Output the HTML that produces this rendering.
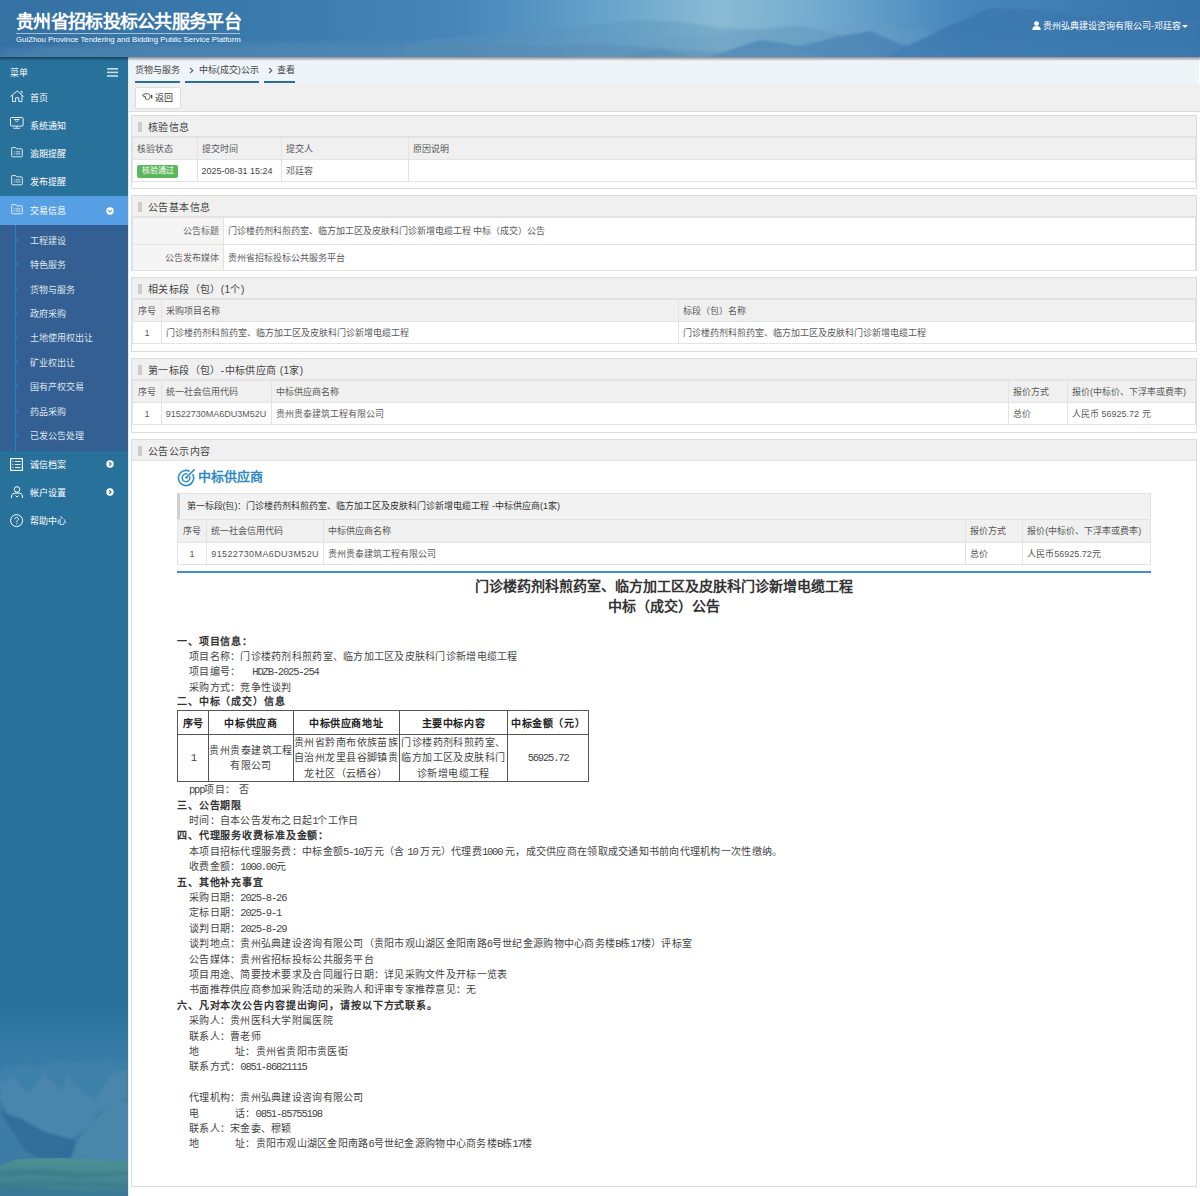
<!DOCTYPE html>
<html lang="zh-CN">
<head>
<meta charset="utf-8">
<style>
*{margin:0;padding:0;box-sizing:border-box}
html,body{width:1200px;height:1196px;overflow:hidden;background:#fff;font-family:"Liberation Sans",sans-serif;color:#333}
.abs{position:absolute}
#hdr{position:absolute;left:0;top:0;width:1200px;height:57px;overflow:hidden;background:linear-gradient(90deg,#3572a6 0%,#4a86b8 25%,#6aa2c6 50%,#7fb2cf 58%,#5a94c0 75%,#3d7db0 100%)}
#hdr svg{position:absolute;left:0;top:0}
#title{position:absolute;left:16px;top:10px;font-size:18px;font-weight:bold;color:#fff;letter-spacing:-0.7px;line-height:24px;white-space:nowrap}
#tline{position:absolute;left:16px;top:32.5px;width:224px;height:1px;background:rgba(255,255,255,.55)}
#sub{position:absolute;left:16px;top:35px;font-size:7.8px;color:#fff;line-height:10px;white-space:nowrap}
#user{position:absolute;left:1043px;top:20px;font-size:9px;color:#fff;line-height:12px;white-space:nowrap}
#side{position:absolute;left:0;top:57px;width:128px;height:1139px;background:#28719b;overflow:hidden}
#shadow{position:absolute;left:0;top:57px;width:1200px;height:4px;background:linear-gradient(rgba(0,0,0,.42),rgba(0,0,0,0))}
.mi{position:absolute;left:0;width:128px;height:28px;color:#fff;font-size:9px;line-height:28px}
.mi .t{position:absolute;left:30px;top:1px}
.mi svg{position:absolute;left:10px}
.smi{position:absolute;left:30px;color:#dde6ef;font-size:9px;line-height:12px;white-space:nowrap}
.dot{position:absolute;left:13.5px;width:4px;height:4px;border-radius:50%;border:1px solid #2b82c4;background:#345f92}
#main{position:absolute;left:128px;top:57px;width:1072px;height:1139px;background:#fff;border-left:1px solid #e4ebf0}
.bc{position:absolute;top:0;height:26px;background:#eff4f9}
.panel{position:absolute;left:131px;width:1066px;border:1px solid #ddd;background:#fff}
.ph{height:21px;background:#f0f0f0;border-bottom:1px solid #e3e3e3;position:relative;font-size:10px;letter-spacing:0.4px;line-height:23px;color:#444;padding-left:16px;white-space:nowrap}
.ph:before{content:"";position:absolute;left:6px;top:6px;width:4px;height:10px;background:#ccc}
table{border-collapse:collapse;font-size:9px;color:#5a5a5a}
td{border:1px solid #e3e3e3;padding:0 4px;height:22px;white-space:nowrap}
tr.h td{background:#f0f0f0}

.crumb{font-size:9px;line-height:12px;color:#444;white-space:nowrap}
.uline{height:2px;background:#2a6c9c}
.badge{display:inline-block;background:#5cb85c;color:#fff;font-size:8px;line-height:12.8px;padding:0 4.5px;border-radius:2px;position:relative;top:1px}
td.lab{background:#f5f5f5;text-align:right;color:#666}
.t2 td{height:26.5px}


.t5{font-size:9px;color:#555}
.t5 td{height:22.7px;border-color:#e3e3e3}
.ttl{font-size:14px;line-height:20px;font-weight:bold;text-align:center;color:#333;font-family:"Liberation Serif",serif;white-space:nowrap}
.hd{left:177px;font-size:10px;letter-spacing:0.87px;line-height:15px;font-weight:bold;color:#333;white-space:nowrap;font-family:"Liberation Serif",serif}
.bd{left:189px;font-size:10px;letter-spacing:0.27px;line-height:15px;color:#444;white-space:nowrap;font-family:"Liberation Serif",serif}
.a{font-family:"Liberation Mono",monospace;font-size:10.5px;letter-spacing:-1.2px}
.t6{border:1px solid #555;font-family:"Liberation Serif",serif;color:#333}
.t6 td{border:1px solid #555;text-align:center;padding:0;white-space:nowrap}
.h6 td{height:24.7px;font-size:10px;letter-spacing:0.6px;font-weight:bold;color:#222}
.d6 td{height:46.6px;font-size:10px;letter-spacing:0.43px;line-height:15.3px;color:#444}

</style>
</head>
<body>
<div id="hdr">
<svg width="1200" height="57" viewBox="0 0 1200 57">
 <defs>
  <linearGradient id="hg" x1="0" y1="0" x2="1" y2="0">
   <stop offset="0" stop-color="#3b76a7"/><stop offset="0.2" stop-color="#3f7fb2"/><stop offset="0.38" stop-color="#4a8abd"/>
   <stop offset="0.5" stop-color="#66a2c9"/><stop offset="0.6" stop-color="#8abbd3"/><stop offset="0.68" stop-color="#74accf"/>
   <stop offset="0.8" stop-color="#4686bb"/><stop offset="1" stop-color="#3574a9"/>
  </linearGradient>
  <linearGradient id="vg2" x1="0" y1="0" x2="1" y2="0"><stop offset="0" stop-color="#2a669a" stop-opacity=".35"/><stop offset="0.35" stop-color="#2a669a" stop-opacity=".15"/><stop offset="0.5" stop-color="#2a669a" stop-opacity="0"/></linearGradient>
  <filter id="bl" x="-5%" y="-50%" width="110%" height="200%"><feGaussianBlur stdDeviation="2.5"/></filter>
  <filter id="bl2" x="-5%" y="-50%" width="110%" height="200%"><feGaussianBlur stdDeviation="1.2"/></filter>
 </defs>
 <rect width="1200" height="57" fill="url(#hg)"/>
 <rect width="1200" height="57" fill="url(#vg2)"/>
 <g filter="url(#bl)">
  <path d="M0 50 L40 46 L90 48 L150 44 L220 47 L300 44 L380 46 L460 40 L540 42 L620 34 L700 38 L760 27 L830 22 L880 26 L920 30 L990 40 L1060 44 L1130 46 L1200 48 L1200 60 L0 60Z" fill="#6d9fc2" opacity=".25"/>
 </g>
 <g filter="url(#bl2)">
  <path d="M880 60 L940 30 L990 8 L1040 10 L1080 16 L1130 14 L1200 20 L1200 60Z" fill="#3977ad" opacity=".75"/>
  <path d="M700 60 L760 40 L800 46 L840 36 L871 31 L900 44 L940 52 L980 60Z" fill="#4580b3" opacity=".75"/>
  <path d="M600 60 L660 48 L720 52 L780 46 L820 56 L830 60Z" fill="#5b93bd" opacity=".5"/>
  <path d="M380 60 L420 40 L470 36 L520 30 L560 28 L600 24 L640 20 L680 22 L720 28 L760 30 L800 26 L830 32 L860 40 L880 60Z" fill="#5a8fb8" opacity=".35"/>
  <path d="M0 60 L60 44 L120 42 L180 46 L240 40 L300 42 L360 38 L420 44 L480 42 L540 46 L600 44 L660 48 L700 60Z" fill="#4f86b0" opacity=".35"/>
 </g>
</svg>
<div id="title">贵州省招标投标公共服务平台</div>
<div id="tline"></div>
<div id="sub">GuiZhou Province Tendering and Bidding Public Service Platform</div>
<svg class="abs" style="left:1032px;top:21px" width="9" height="9" viewBox="0 0 9 9"><circle cx="4.5" cy="2.6" r="2.4" fill="#fff"/><path d="M0.3 9 C0.5 5.6 2.2 5.2 4.5 5.2 C6.8 5.2 8.5 5.6 8.7 9Z" fill="#fff"/></svg>
<div id="user">贵州弘典建设咨询有限公司-邓廷容</div>
<svg class="abs" style="left:1182px;top:25px" width="6" height="4" viewBox="0 0 6 4"><path d="M0 0 L6 0 L3 3Z" fill="#fff"/></svg>
</div>

<div id="side">

 <div class="abs" style="left:10px;top:11px;font-size:9px;color:#fff;line-height:10px">菜单</div>
 <svg class="abs" style="left:107px;top:11px" width="11" height="9" viewBox="0 0 11 9"><rect x="0" y="0" width="11" height="1.6" fill="#c9dbe8"/><rect x="0" y="3.6" width="11" height="1.6" fill="#c9dbe8"/><rect x="0" y="7.2" width="11" height="1.6" fill="#c9dbe8"/></svg>
 <div class="mi" style="top:26px"><svg style="top:6px;left:9.5px" width="15" height="14" viewBox="0 0 15 14"><path d="M0.6 7.6 L7.2 1.9 L13.6 7.6" fill="none" stroke="#e9f0f6" stroke-width="1"/><path d="M2.5 6.2 V12.6 H5.6 V8.8 H8.8 V12.6 H12 V6.2" fill="none" stroke="#e9f0f6" stroke-width="1"/><path d="M11 3.6 V2.2 H12 V4.6" fill="none" stroke="#e9f0f6" stroke-width="0.8"/></svg><span class="t">首页</span></div>
 <div class="mi" style="top:54px"><svg style="top:5.5px" width="14" height="13" viewBox="0 0 14 13"><rect x="0.5" y="0.5" width="12.6" height="8.6" rx="1" fill="none" stroke="#e9f0f6" stroke-width="1"/><path d="M3.8 2.5 H9.6 M5 3.6 L6.7 4.6 L8.4 3.6 M6.7 9.1 V10.8 M3.2 11.3 H10.2" fill="none" stroke="#e9f0f6" stroke-width="0.9"/></svg><span class="t">系统通知</span></div>
 <div class="mi" style="top:82px"><svg style="top:8px;left:10.8px" width="12.2" height="11" viewBox="0 0 13 12"><path d="M1.1 0.6 H5 L5.8 2 H11.4 Q12.2 2 12.2 2.8 V9.9 Q12.2 10.7 11.4 10.7 H1.4 Q0.6 10.7 0.6 9.9 V1.1 Q0.6 0.6 1.1 0.6Z" fill="none" stroke="#e9f0f6" stroke-width="1"/><path d="M2.8 5.3 H3.8 M4.8 5.3 H10.2 M2.8 7.6 H3.8 M4.8 7.6 H10.2" stroke="#e9f0f6" stroke-width="0.9"/></svg><span class="t">逾期提醒</span></div>
 <div class="mi" style="top:110px"><svg style="top:8px;left:10.8px" width="12.2" height="11" viewBox="0 0 13 12"><path d="M1.1 0.6 H5 L5.8 2 H11.4 Q12.2 2 12.2 2.8 V9.9 Q12.2 10.7 11.4 10.7 H1.4 Q0.6 10.7 0.6 9.9 V1.1 Q0.6 0.6 1.1 0.6Z" fill="none" stroke="#e9f0f6" stroke-width="1"/><path d="M2.8 5.3 H3.8 M4.8 5.3 H10.2 M2.8 7.6 H3.8 M4.8 7.6 H10.2" stroke="#e9f0f6" stroke-width="0.9"/></svg><span class="t">发布提醒</span></div>
 <div class="mi" style="top:139px;height:28.5px;background:#579fe4"><svg style="top:8px;left:10.8px" width="12.2" height="11" viewBox="0 0 13 12"><path d="M1.1 0.6 H5 L5.8 2 H11.4 Q12.2 2 12.2 2.8 V9.9 Q12.2 10.7 11.4 10.7 H1.4 Q0.6 10.7 0.6 9.9 V1.1 Q0.6 0.6 1.1 0.6Z" fill="none" stroke="#e9f0f6" stroke-width="1"/><path d="M2.8 5.3 H3.8 M4.8 5.3 H10.2 M2.8 7.6 H3.8 M4.8 7.6 H10.2" stroke="#e9f0f6" stroke-width="0.9"/></svg><span class="t">交易信息</span>
  <svg class="abs" style="left:106px;top:10.5px" width="8" height="8" viewBox="0 0 8 8"><circle cx="4" cy="4" r="3.7" fill="#fff"/><path d="M2.2 3.2 L4 5 L5.8 3.2" fill="none" stroke="#579fe4" stroke-width="1.2"/></svg></div>
 <div class="abs" style="left:0;top:167.5px;width:128px;height:226px;background:#345f92"></div>
 <div class="abs" style="left:15px;top:167.5px;width:1px;height:226px;background:#2b80c2"></div>
 <div class="dot" style="top:181.0px"></div><div class="smi" style="top:178.0px">工程建设</div>
 <div class="dot" style="top:205.4px"></div><div class="smi" style="top:202.4px">特色服务</div>
 <div class="dot" style="top:229.7px"></div><div class="smi" style="top:226.7px">货物与服务</div>
 <div class="dot" style="top:254.1px"></div><div class="smi" style="top:251.1px">政府采购</div>
 <div class="dot" style="top:278.4px"></div><div class="smi" style="top:275.4px">土地使用权出让</div>
 <div class="dot" style="top:302.7px"></div><div class="smi" style="top:299.8px">矿业权出让</div>
 <div class="dot" style="top:327.1px"></div><div class="smi" style="top:324.1px">国有产权交易</div>
 <div class="dot" style="top:351.5px"></div><div class="smi" style="top:348.5px">药品采购</div>
 <div class="dot" style="top:375.8px"></div><div class="smi" style="top:372.8px">已发公告处理</div>

 <div class="mi" style="top:393px"><svg style="top:7.5px" width="13" height="13" viewBox="0 0 13 13"><rect x="0.6" y="0.6" width="11.8" height="11.8" fill="none" stroke="#fff" stroke-width="1.1"/><path d="M2.5 3.5 H3.5 M5 3.5 H10.5 M2.5 6.5 H3.5 M5 6.5 H10.5 M2.5 9.5 H3.5 M5 9.5 H10.5" stroke="#fff" stroke-width="0.9"/></svg><span class="t">诚信档案</span>
  <svg class="abs" style="left:105.5px;top:10px" width="8" height="8" viewBox="0 0 8 8"><circle cx="4" cy="4" r="3.7" fill="#fff"/><path d="M3.2 2.2 L5 4 L3.2 5.8" fill="none" stroke="#28719b" stroke-width="1.2"/></svg></div>
 <div class="mi" style="top:421px"><svg style="left:11px;top:7.5px" width="12" height="13" viewBox="0 0 12 13"><circle cx="6" cy="3.5" r="2.8" fill="none" stroke="#fff" stroke-width="1"/><path d="M0.6 12 V10 C0.6 8 2.5 7 6 7 C9.5 7 11.4 8 11.4 10 V12 M4.5 9.6 L6 11 L7.5 9.6" fill="none" stroke="#fff" stroke-width="1"/></svg><span class="t">帐户设置</span>
  <svg class="abs" style="left:105.5px;top:10px" width="8" height="8" viewBox="0 0 8 8"><circle cx="4" cy="4" r="3.7" fill="#fff"/><path d="M3.2 2.2 L5 4 L3.2 5.8" fill="none" stroke="#28719b" stroke-width="1.2"/></svg></div>
 <div class="mi" style="top:449px"><svg style="top:7.5px" width="14" height="14" viewBox="0 0 14 14"><circle cx="6.6" cy="6.6" r="6" fill="none" stroke="#fff" stroke-width="1"/><path d="M4.9 5.2 C4.9 3.9 5.7 3.3 6.6 3.3 C7.6 3.3 8.4 4 8.4 5 C8.4 6.2 6.8 6.4 6.8 7.8 V8.4" fill="none" stroke="#fff" stroke-width="0.9"/><circle cx="6.8" cy="10" r="0.6" fill="#fff"/></svg><span class="t">帮助中心</span></div>
 <svg class="abs" style="left:0;top:943px" width="128" height="196" viewBox="0 1000 128 196">
  <defs>
   <linearGradient id="sg" x1="0" y1="0" x2="0" y2="1"><stop offset="0" stop-color="#3a7ea9" stop-opacity="0"/><stop offset="0.36" stop-color="#3a7ea9" stop-opacity="1"/><stop offset="1" stop-color="#3a7ea9" stop-opacity="1"/></linearGradient>
   <filter id="sb"><feGaussianBlur stdDeviation="0.9"/></filter>
   <linearGradient id="fg" x1="0" y1="0" x2="0" y2="1"><stop offset="0" stop-color="#4c9094"/><stop offset="1" stop-color="#3e7f91"/></linearGradient>
  </defs>
  <rect x="0" y="1000" width="128" height="196" fill="url(#sg)"/>
  <g filter="url(#sb)">
  <path d="M0 1072 L20 1064 L40 1066 L60 1060 L90 1064 L110 1058 L128 1062 L128 1196 L0 1196Z" fill="#3f82ab" opacity=".45"/>
  <path d="M0 1079 L5 1082 L13 1077 L22 1088 L30 1092 L44 1072 L55 1085 L62 1090 L67 1075 L80 1090 L95 1100 L100 1090 L112 1074 L121 1070 L128 1071 L128 1196 L0 1196Z" fill="#4885ac"/>
  <path d="M0 1100 L12 1120 L22 1140 L30 1150 L60 1152 L70 1140 L85 1130 L100 1112 L128 1098 L128 1196 L0 1196Z" fill="#3a78a2" opacity=".8"/>
  <path d="M0 1112 L15 1135 L25 1150 L40 1158 L75 1158 L75 1140 L45 1132 L20 1118Z" fill="#2f6d98" opacity=".9"/>
  <path d="M70 1160 L78 1140 L92 1122 L110 1106 L128 1100 L128 1162Z" fill="#4a87ab" opacity=".9"/>
  </g>
  <path d="M0 1166 L18 1159 L60 1158 L100 1160 L128 1161 L128 1196 L0 1196Z" fill="url(#fg)"/>
  <g filter="url(#sb)">
  <path d="M0 1170 L40 1169 L90 1173 L128 1172 L128 1175 L80 1178 L30 1175 L0 1177Z" fill="#3a7a8a" opacity=".7"/>
  <path d="M0 1182 L50 1180 L128 1184 L128 1188 L60 1186 L0 1188Z" fill="#3a7a8a" opacity=".6"/>
  <path d="M0 1185 L40 1188 L90 1192 L128 1190 L128 1196 L0 1196Z" fill="#3a7896" opacity=".8"/>
  </g>
 </svg>

</div>

<div id="main">

 <div class="abs" style="left:0;top:0;width:1070px;height:26px;background:#eff4f9;border-bottom-right-radius:4px"></div>
 <div class="abs" style="left:0;top:26px;width:1072px;height:29px;background:#f0f0f0;border-bottom:1px solid #dcdcdc"></div>

</div>

<div class="abs crumb" style="left:134.7px;top:64px;width:45px">货物与服务</div>
<div class="abs uline" style="left:134.7px;top:80.7px;width:45px"></div>
<svg class="abs" style="left:188.5px;top:66.5px" width="5" height="7" viewBox="0 0 5 7"><path d="M1 0.8 L3.8 3.5 L1 6.2" fill="none" stroke="#555" stroke-width="1.1"/></svg>
<div class="abs crumb" style="left:198.7px;top:64px">中标(成交)公示</div>
<div class="abs uline" style="left:185.3px;top:80.7px;width:73.4px"></div>
<svg class="abs" style="left:267.5px;top:66.5px" width="5" height="7" viewBox="0 0 5 7"><path d="M1 0.8 L3.8 3.5 L1 6.2" fill="none" stroke="#555" stroke-width="1.1"/></svg>
<div class="abs crumb" style="left:277px;top:64px">查看</div>
<div class="abs uline" style="left:264px;top:80.7px;width:31.3px"></div>
<div class="abs" style="left:135px;top:86.5px;width:46px;height:22px;background:#fff;border:1px solid #dedede;border-radius:2px"></div>
<svg class="abs" style="left:142px;top:92px" width="11" height="9" viewBox="0 0 11 9"><path d="M0.5 3.2 L3 1.8 H5.5 C7.5 1.8 8 3 8 4.5 C8 6.2 7.2 7.4 5.5 7.4 H4.6 C3.8 7.4 3.4 6.8 3.4 6 V4.4 H1.5 Z" fill="none" stroke="#444" stroke-width="0.9"/><rect x="9" y="2.8" width="1.3" height="3.6" fill="#444"/></svg>
<div class="abs crumb" style="left:154.7px;top:92px;color:#333">返回</div>

<div class="panel" style="top:115px;height:74px">
 <div class="ph">核验信息</div>
 <table style="width:1064px;table-layout:fixed">
  <colgroup><col style="width:64.5px"><col style="width:84px"><col style="width:127.5px"><col></colgroup>
  <tr class="h"><td>核验状态</td><td>提交时间</td><td>提交人</td><td>原因说明</td></tr>
  <tr><td><span class="badge">核验通过</span></td><td style="color:#444">2025-08-31 15:24</td><td>邓廷容</td><td></td></tr>
 </table>
</div>

<div class="panel" style="top:195px;height:76px">
 <div class="ph">公告基本信息</div>
 <table style="width:1064px;table-layout:fixed" class="t2">
  <colgroup><col style="width:90.5px"><col></colgroup>
  <tr><td class="lab">公告标题</td><td>门诊楼药剂科煎药室、临方加工区及皮肤科门诊新增电缆工程 中标（成交）公告</td></tr>
  <tr><td class="lab">公告发布媒体</td><td>贵州省招标投标公共服务平台</td></tr>
 </table>
</div>

<div class="panel" style="top:277px;height:75px">
 <div class="ph">相关标段（包）(1个)</div>
 <table style="width:1064px;table-layout:fixed">
  <colgroup><col style="width:28.8px"><col style="width:517.5px"><col></colgroup>
  <tr class="h"><td style="text-align:center;padding:0">序号</td><td>采购项目名称</td><td>标段（包）名称</td></tr>
  <tr><td style="text-align:center;padding:0">1</td><td>门诊楼药剂科煎药室、临方加工区及皮肤科门诊新增电缆工程</td><td>门诊楼药剂科煎药室、临方加工区及皮肤科门诊新增电缆工程</td></tr>
 </table>
</div>

<div class="panel" style="top:358px;height:75px">
 <div class="ph">第一标段（包）-中标供应商 (1家)</div>
 <table style="width:1064px;table-layout:fixed">
  <colgroup><col style="width:28.8px"><col style="width:110px"><col style="width:737.7px"><col style="width:58.5px"><col></colgroup>
  <tr class="h"><td style="text-align:center;padding:0">序号</td><td>统一社会信用代码</td><td>中标供应商名称</td><td>报价方式</td><td>报价(中标价、下浮率或费率)</td></tr>
  <tr><td style="text-align:center;padding:0">1</td><td>91522730MA6DU3M52U</td><td>贵州贵泰建筑工程有限公司</td><td>总价</td><td>人民币 56925.72 元</td></tr>
 </table>
</div>

<div class="panel" style="top:439px;height:748px">
 <div class="ph">公告公示内容</div>
</div>


<svg class="abs" style="left:177px;top:468px" width="19" height="19" viewBox="0 0 19 19">
 <path d="M15.6 6.2 A7.6 7.6 0 1 1 12.8 3.4" fill="none" stroke="#3290c9" stroke-width="1.6"/>
 <path d="M12.6 8.2 A3.9 3.9 0 1 1 10.6 6.2" fill="none" stroke="#3290c9" stroke-width="1.5"/>
 <circle cx="9.5" cy="9.5" r="1.3" fill="#3290c9"/>
 <path d="M9.5 9.5 L17.6 1.4" stroke="#3290c9" stroke-width="1.6"/>
</svg>
<div class="abs" style="left:198px;top:468px;font-size:13px;line-height:18px;font-weight:bold;color:#2f8ac6;white-space:nowrap">中标供应商</div>
<div class="abs" style="left:177px;top:493px;width:974px;height:27px;background:#f2f2f2;border-left:3px solid #cfcfcf;border-top:1px solid #e2e2e2;border-right:1px solid #e2e2e2;border-bottom:1px solid #d2d2d2"></div>
<div class="abs" style="left:186.5px;top:500px;font-size:9px;line-height:12px;color:#333;white-space:nowrap">第一标段(包)：门诊楼药剂科煎药室、临方加工区及皮肤科门诊新增电缆工程 -中标供应商(1家)</div>
<table class="abs t5" style="left:177px;top:519px;width:974px;table-layout:fixed">
  <colgroup><col style="width:29.25px"><col style="width:117px"><col style="width:641.35px"><col style="width:57.7px"><col></colgroup>
  <tr class="h"><td style="text-align:center;padding:0">序号</td><td>统一社会信用代码</td><td>中标供应商名称</td><td>报价方式</td><td>报价(中标价、下浮率或费率)</td></tr>
  <tr><td style="text-align:center;padding:0">1</td><td style="letter-spacing:0.4px">91522730MA6DU3M52U</td><td>贵州贵泰建筑工程有限公司</td><td>总价</td><td>人民币56925.72元</td></tr>
</table>
<div class="abs" style="left:177px;top:571px;width:974px;height:2px;background:#3d8fc9"></div>
<div class="abs ttl" style="left:177px;top:577px;width:974px">门诊楼药剂科煎药室、临方加工区及皮肤科门诊新增电缆工程</div>
<div class="abs ttl" style="left:177px;top:597px;width:974px">中标（成交）公告</div>
<div class="abs hd" style="top:633.80px">一、项目信息：</div>
<div class="abs bd" style="top:648.90px">项目名称：门诊楼药剂科煎药室、临方加工区及皮肤科门诊新增电缆工程</div>
<div class="abs bd" style="top:664.10px">项目编号：<i style="display:inline-block;width:12px"></i><span class="a">HDZB-2025-254</span></div>
<div class="abs bd" style="top:679.50px">采购方式：竞争性谈判</div>
<div class="abs hd" style="top:694.00px">二、中标（成交）信息</div>
<table class="abs t6" style="left:177px;top:709.5px;width:412px;table-layout:fixed">
 <colgroup><col style="width:31.4px"><col style="width:84.2px"><col style="width:106px"><col style="width:108.6px"><col></colgroup>
 <tr class="h6"><td>序号</td><td>中标供应商</td><td>中标供应商地址</td><td>主要中标内容</td><td>中标金额（元）</td></tr>
 <tr class="d6"><td><span class="a">1</span></td><td>贵州贵泰建筑工程<br>有限公司</td><td>贵州省黔南布依族苗族<br>自治州龙里县谷脚镇贵<br>龙社区（云栖谷）</td><td>门诊楼药剂科煎药室、<br>临方加工区及皮肤科门<br>诊新增电缆工程</td><td><span class="a">56925.72</span></td></tr>
</table>
<div class="abs bd" style="top:782.20px"><span class="a">ppp</span>项目：<i style="display:inline-block;width:4px"></i>否</div>
<div class="abs hd" style="top:797.60px">三、公告期限</div>
<div class="abs bd" style="top:812.99px">时间：自本公告发布之日起<span class="a">1</span>个工作日</div>
<div class="abs hd" style="top:828.39px">四、代理服务收费标准及金额：</div>
<div class="abs bd" style="top:843.78px">本项目招标代理服务费：中标金额<span class="a">5-10</span>万元（含 <span class="a">10</span> 万元）代理费<span class="a">1000</span> 元，成交供应商在领取成交通知书前向代理机构一次性缴纳。</div>
<div class="abs bd" style="top:859.18px">收费金额：<span class="a">1000.00</span>元</div>
<div class="abs hd" style="top:874.58px">五、其他补充事宜</div>
<div class="abs bd" style="top:889.97px">采购日期：<span class="a">2025-8-26</span></div>
<div class="abs bd" style="top:905.37px">定标日期：<span class="a">2025-9-1</span></div>
<div class="abs bd" style="top:920.76px">谈判日期：<span class="a">2025-8-29</span></div>
<div class="abs bd" style="top:936.16px">谈判地点：贵州弘典建设咨询有限公司（贵阳市观山湖区金阳南路<span class="a">6</span>号世纪金源购物中心商务楼<span class="a">B</span>栋<span class="a">17</span>楼）评标室</div>
<div class="abs bd" style="top:951.56px">公告媒体：贵州省招标投标公共服务平台</div>
<div class="abs bd" style="top:966.95px">项目用途、简要技术要求及合同履行日期：详见采购文件及开标一览表</div>
<div class="abs bd" style="top:982.35px">书面推荐供应商参加采购活动的采购人和评审专家推荐意见：无</div>
<div class="abs hd" style="top:997.74px">六、凡对本次公告内容提出询问，请按以下方式联系。</div>
<div class="abs bd" style="top:1013.14px">采购人：贵州医科大学附属医院</div>
<div class="abs bd" style="top:1028.54px">联系人：曹老师</div>
<div class="abs bd" style="top:1043.93px"><i style="display:inline-block;width:46px;font-style:normal">地</i>址：贵州省贵阳市贵医街</div>
<div class="abs bd" style="top:1059.33px">联系方式：<span class="a">0851-86821115</span></div>
<div class="abs bd" style="top:1074.72px"></div>
<div class="abs bd" style="top:1090.12px">代理机构：贵州弘典建设咨询有限公司</div>
<div class="abs bd" style="top:1105.52px"><i style="display:inline-block;width:46px;font-style:normal">电</i>话：<span class="a">0851-85755198</span></div>
<div class="abs bd" style="top:1120.91px">联系人：宋金委、穆颖</div>
<div class="abs bd" style="top:1136.31px"><i style="display:inline-block;width:46px;font-style:normal">地</i>址：贵阳市观山湖区金阳南路<span class="a">6</span>号世纪金源购物中心商务楼<span class="a">B</span>栋<span class="a">17</span>楼</div>

<div id="shadow"></div>
</body>
</html>
